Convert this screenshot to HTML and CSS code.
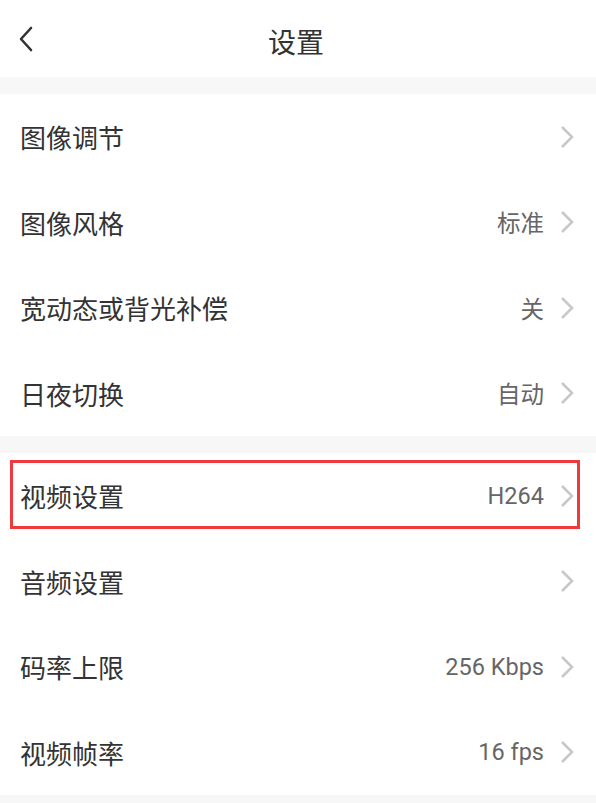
FILE: index.html
```html
<!DOCTYPE html>
<html lang="zh-CN">

<head>
    <meta charset="UTF-8">
    <title>设置</title>
    <link rel="stylesheet" href="styles.css">
</head>

<body>
    <!-- 顶部导航 -->
    <div class="header">
        <svg class="back" width="16" height="26" viewBox="0 0 16 26">
            <path d="M13 2 L3 13 L13 24" fill="none" stroke="#333" stroke-width="2.6" stroke-linecap="round" stroke-linejoin="round" />
        </svg>
        <div class="title">设置</div>
    </div>

    <div class="gap"></div>

    <!-- 图像 -->
    <div class="group">
        <div class="row"><span class="label">图像调节</span><span class="value"></span><svg class="arrow" width="14" height="24" viewBox="0 0 14 24"><path d="M2 2 L12 12 L2 22" /></svg></div>
        <div class="row"><span class="label">图像风格</span><span class="value">标准</span><svg class="arrow" width="14" height="24" viewBox="0 0 14 24"><path d="M2 2 L12 12 L2 22" /></svg></div>
        <div class="row"><span class="label">宽动态或背光补偿</span><span class="value">关</span><svg class="arrow" width="14" height="24" viewBox="0 0 14 24"><path d="M2 2 L12 12 L2 22" /></svg></div>
        <div class="row"><span class="label">日夜切换</span><span class="value">自动</span><svg class="arrow" width="14" height="24" viewBox="0 0 14 24"><path d="M2 2 L12 12 L2 22" /></svg></div>
    </div>

    <div class="gap"></div>

    <!-- 音视频 -->
    <div class="group">
        <div class="row selected"><span class="label">视频设置</span><span class="value">H264</span><svg class="arrow" width="14" height="24" viewBox="0 0 14 24"><path d="M2 2 L12 12 L2 22" /></svg></div>
        <div class="row"><span class="label">音频设置</span><span class="value"></span><svg class="arrow" width="14" height="24" viewBox="0 0 14 24"><path d="M2 2 L12 12 L2 22" /></svg></div>
        <div class="row"><span class="label">码率上限</span><span class="value">256 Kbps</span><svg class="arrow" width="14" height="24" viewBox="0 0 14 24"><path d="M2 2 L12 12 L2 22" /></svg></div>
        <div class="row"><span class="label">视频帧率</span><span class="value">16 fps</span><svg class="arrow" width="14" height="24" viewBox="0 0 14 24"><path d="M2 2 L12 12 L2 22" /></svg></div>
    </div>

    <div class="gap"></div>
</body>

</html>
```
FILE: styles.css
```css
body {
    margin: 0;
    background-color: #fff;
    font-family: Roboto, "Noto Sans CJK SC", sans-serif;
    color: #333;
}

.header {
    position: relative;
    height: 77px;
    display: flex;
    align-items: center;
    justify-content: center;
}

.back {
    position: absolute;
    left: 18px;
    top: 26px;
}

.title {
    font-size: 28px;
    margin-top: 4px;
    margin-right: 4px;
}

.gap {
    height: 17px;
    background-color: #f7f7f7;
}

.row {
    position: relative;
    height: 85.5px;
    display: flex;
    align-items: center;
    padding: 0 22px 0 20px;
}

.label {
    flex: 1;
    font-size: 26px;
}

.value {
    font-size: 23.5px;
    color: #666;
    margin-right: 16px;
}

.arrow {
    fill: none;
    stroke: #c8c8c8;
    stroke-width: 2.6;
}

.selected::after {
    content: "";
    position: absolute;
    left: 10px;
    right: 16px;
    top: 7px;
    bottom: 10px;
    border: 3px solid #ef3a3d;
}
```
